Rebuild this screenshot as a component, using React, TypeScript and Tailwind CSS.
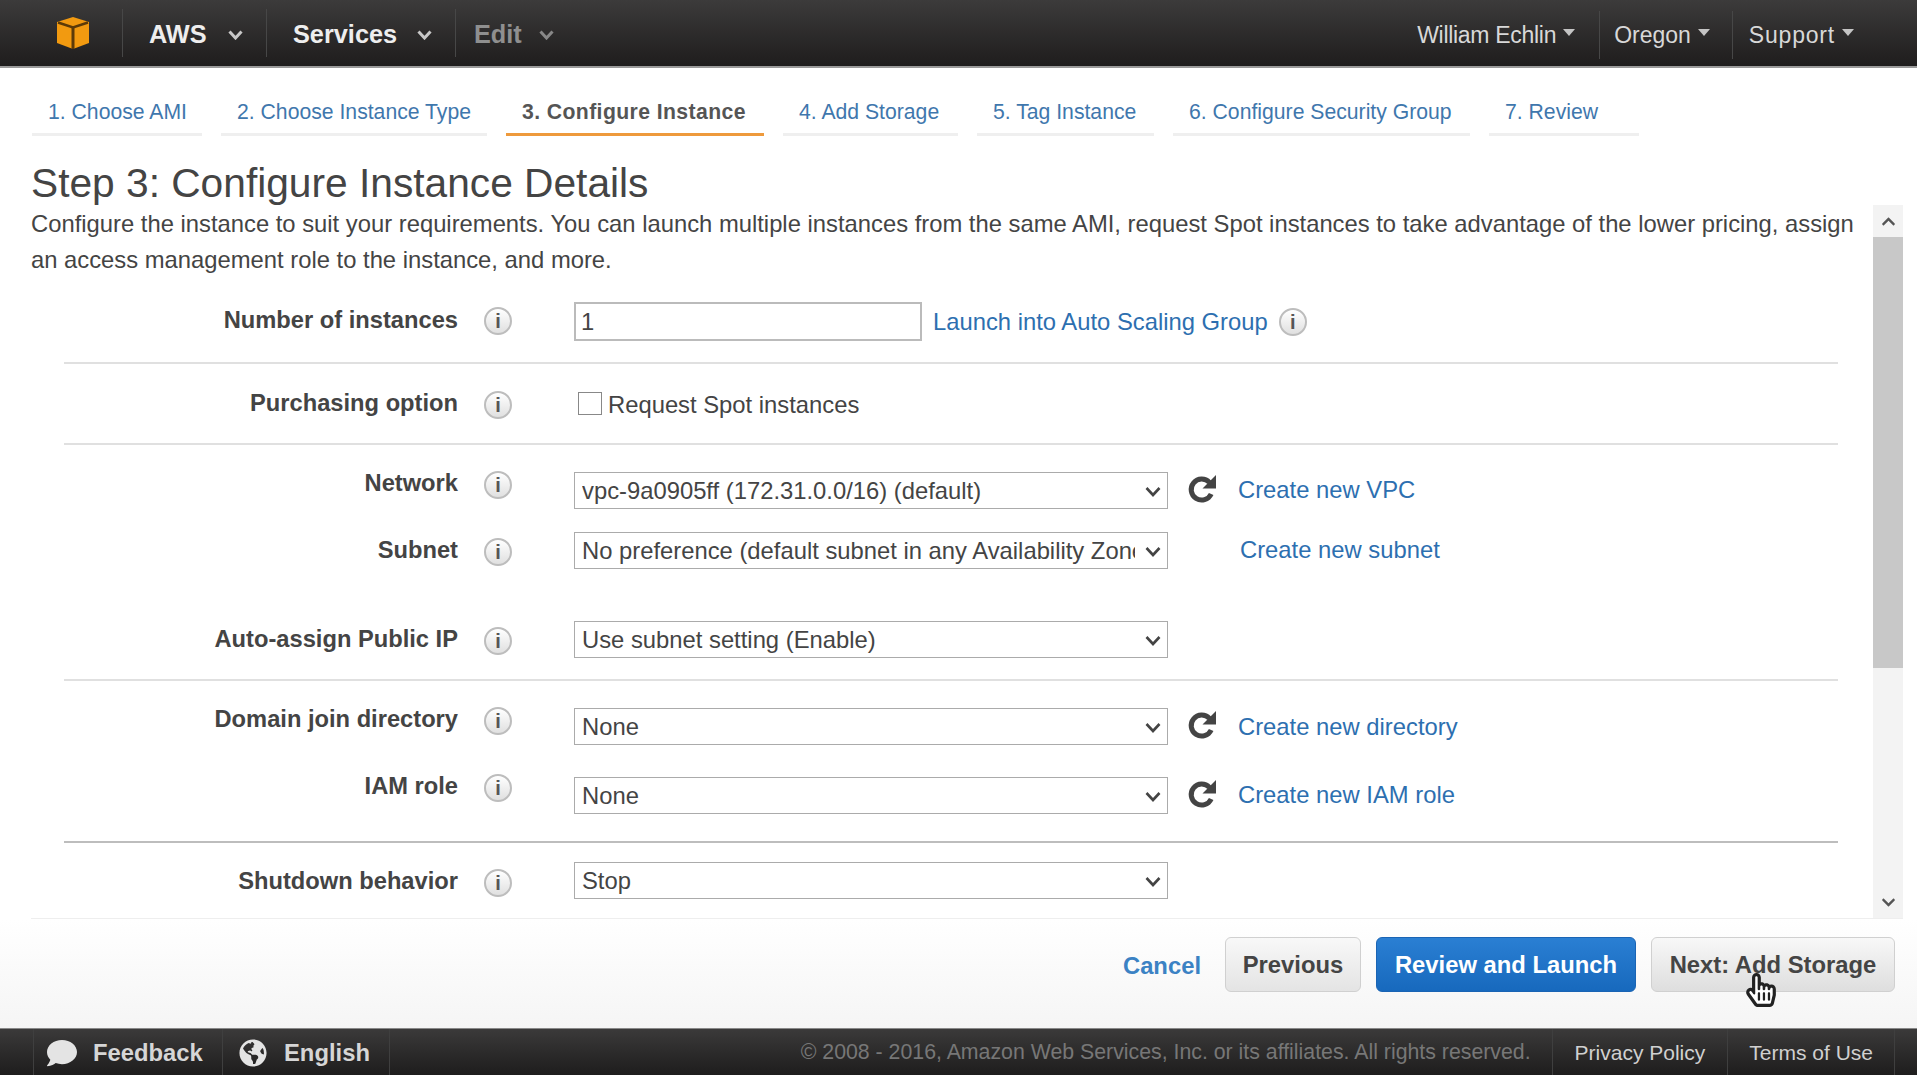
import React from "react";
import { FaComment, FaGlobeAmericas, FaChevronUp, FaChevronDown, FaRegHandPointer, FaHandPointer } from "react-icons/fa";

const Info = () => (
  <span className="flex h-[28px] w-[28px] shrink-0 items-center justify-center rounded-full border-2 border-[#bdbdbd] bg-gradient-to-b from-white to-[#e0e0e0] font-['Liberation_Sans',sans-serif] text-[20px] font-bold leading-none text-[#555]">
    i
  </span>
);

const Chev = ({ c = "#c8c8c8" }: { c?: string }) => (
  <svg width="15" height="10" viewBox="0 0 15 10" className="shrink-0">
    <path d="M1.5 1.5 L7.5 8 L13.5 1.5" fill="none" stroke={c} strokeWidth="3" />
  </svg>
);

const Caret = () => <span className="ml-[7px] mb-[5px] h-0 w-0 border-x-[6px] border-t-[7px] border-x-transparent border-t-[#c4c4c4]" />;

const Row = ({ label, className, off, children }: { label: string; className: string; off: string; children: React.ReactNode }) => (
  <div className={`flex items-center ${className}`}>
    <div className={`flex items-center ${off}`}>
      <div className="w-[394px] pb-[2px] text-right text-[23.7px] font-bold text-[#444]">{label}</div>
      <div className="flex w-[80px] justify-center"><Info /></div>
    </div>
    <div className="ml-[36px] flex items-center">{children}</div>
  </div>
);

const Sel = ({ value }: { value: string }) => (
  <div className="relative h-[37px] w-[594px]">
    <select defaultValue={value} className="h-full w-full appearance-none border border-[#ababab] bg-white pl-[7px] pr-[32px] text-[23.8px] text-[#444]">
      <option>{value}</option>
    </select>
    <svg width="16" height="11" viewBox="0 0 16 11" className="pointer-events-none absolute right-[7px] top-[14px]">
      <path d="M1.5 2 L8 9 L14.5 2" fill="none" stroke="#444" strokeWidth="2.6" />
    </svg>
  </div>
);

const Link = ({ children, className = "" }: { children: React.ReactNode; className?: string }) => (
  <a className={`text-[23.8px] text-[#2d6fb0] ${className}`}>{children}</a>
);

const Refresh = () => (
  <svg width="30" height="30" viewBox="0 0 30 30" className="ml-[19px] mb-[3px] shrink-0">
    <path d="M22.4 8.4 A10.5 10.5 0 1 0 24.2 20" fill="none" stroke="#444" strokeWidth="5" />
    <path d="M29 1 L29 14.5 L15.5 14.5 Z" fill="#444" />
  </svg>
);

const Hr = ({ className }: { className: string }) => <div className={`border-t-2 ${className}`} />;

const tabs = [
  ["1. Choose AMI", "w-[170px]"],
  ["2. Choose Instance Type", "w-[266px]"],
  ["3. Configure Instance", "w-[258px]"],
  ["4. Add Storage", "w-[175px]"],
  ["5. Tag Instance", "w-[177px]"],
  ["6. Configure Security Group", "w-[297px]"],
  ["7. Review", "w-[150px]"],
];

export default function App() {
  return (
    <div className="flex h-screen w-full flex-col overflow-hidden bg-white font-['Liberation_Sans',Arial,sans-serif] text-[#444]">
      <header className="flex h-[68px] shrink-0 items-center border-b-2 border-[#9a9a9a] bg-gradient-to-b from-[#3c3b3b] to-[#1f1d1d]">
        <div className="flex w-[122px] pl-[56px]">
          <svg width="34" height="34" viewBox="0 0 34 34">
            <path d="M1 6 L17 1 L33 6 L33 27 L17 33 L1 27 Z" fill="#f29a10" />
            <path d="M2 6.5 L17 11.5 L32 6.5" fill="none" stroke="#5c3a08" strokeWidth="2.5" />
            <path d="M17 11.5 L17 33" stroke="#5c3a08" strokeWidth="3" />
          </svg>
        </div>
        <div className="h-[48px] border-l border-[#474747]" />
        <div className="flex w-[143px] items-center pl-[26px] pt-[4px] text-[25.3px] font-bold text-[#eee]">
          AWS<span className="ml-[21px]"><Chev /></span>
        </div>
        <div className="h-[48px] border-l border-[#474747]" />
        <div className="flex w-[188px] items-center pl-[26px] pt-[4px] text-[25.3px] font-bold text-[#eee]">
          Services<span className="ml-[20px]"><Chev /></span>
        </div>
        <div className="h-[48px] border-l border-[#474747]" />
        <div className="flex items-center pl-[18px] pt-[4px] text-[25.3px] font-bold text-[#8f8f8f]">
          Edit<span className="ml-[17px]"><Chev c="#888" /></span>
        </div>
        <div className="ml-auto flex items-center pr-[63px] pt-[4px] text-[23px] text-[#d8d8d8]">
          <span className="tracking-[-0.3px]">William Echlin</span><Caret />
          <div className="ml-[24px] mr-[14px] h-[48px] border-l border-[#474747]" />
          <span>Oregon</span><Caret />
          <div className="ml-[22px] mr-[16px] h-[48px] border-l border-[#474747]" />
          <span className="tracking-[0.8px]">Support</span><Caret />
        </div>
      </header>

      <nav className="ml-[32px] mt-[26px] flex shrink-0 gap-[19px]">
        {tabs.map(([t, w], i) => (
          <div
            key={t}
            className={`${w} h-[42px] whitespace-nowrap border-b-[3px] pb-[6px] pl-[16px] text-[21.2px] leading-[36px] ${
              i === 2 ? "border-[#ee9a3c] font-bold tracking-[0.4px] text-[#555]" : "border-[#efefef] text-[#3f77ad]"
            }`}
          >
            {t}
          </div>
        ))}
      </nav>

      <h1 className="ml-[31px] mt-[22px] h-[47px] shrink-0 text-[40.7px] leading-[50px] text-[#444]">Step 3: Configure Instance Details</h1>

      <div className="ml-[31px] mr-[14px] flex h-[714px] shrink-0 border-b border-[#eee]">
        <div className="min-w-0 flex-1 overflow-hidden">
          <p className="mt-[1px] w-[1825px] text-[23.8px] leading-[36px] text-[#444]">
            Configure the instance to suit your requirements. You can launch multiple instances from the same AMI, request Spot instances to take advantage of the lower pricing, assign an access management role to the instance, and more.
          </p>
          <div className="ml-[33px] w-[1774px]">
            <Row label="Number of instances" off="" className="mt-[24px] h-[39px]">
              <input readOnly value="1" className="h-[39px] w-[348px] border-2 border-[#bbb] bg-white pl-[5px] text-[23.8px] text-[#444]" />
              <Link className="ml-[11px]">Launch into Auto Scaling Group</Link>
              <span className="ml-[11px]"><Info /></span>
            </Row>
            <Hr className="mt-[21px] border-[#e0e0e0]" />
            <Row label="Purchasing option" off="" className="mt-[26px] h-[30px]">
              <span className="mb-[4px] ml-[4px] h-[23px] w-[24px] border border-[#888] bg-white" />
              <span className="ml-[6px] text-[23.8px]">Request Spot instances</span>
            </Row>
            <Hr className="mt-[23px] border-[#e0e0e0]" />
            <Row label="Network" off="pb-[10px]" className="mt-[27px] h-[36px]">
              <Sel value="vpc-9a0905ff (172.31.0.0/16) (default)" />
              <Refresh />
              <Link className="ml-[21px]">Create new VPC</Link>
            </Row>
            <Row label="Subnet" off="pt-[4px]" className="mt-[24px] h-[36px]">
              <Sel value="No preference (default subnet in any Availability Zone)" />
              <Link className="ml-[72px]">Create new subnet</Link>
            </Row>
            <Row label="Auto-assign Public IP" off="pt-[4px]" className="mt-[53px] h-[36px]">
              <Sel value="Use subnet setting (Enable)" />
            </Row>
            <Hr className="mt-[22px] border-[#e0e0e0]" />
            <Row label="Domain join directory" off="pb-[12px]" className="mt-[27px] h-[37px]">
              <Sel value="None" />
              <Refresh />
              <Link className="ml-[21px]">Create new directory</Link>
            </Row>
            <Row label="IAM role" off="pb-[14px]" className="mt-[32px] h-[36px]">
              <Sel value="None" />
              <Refresh />
              <Link className="ml-[21px]">Create new IAM role</Link>
            </Row>
            <Hr className="mt-[28px] border-[#bdbdbd]" />
            <Row label="Shutdown behavior" off="pt-[5px]" className="mt-[19px] h-[36px]">
              <Sel value="Stop" />
            </Row>
          </div>
        </div>
        <div className="flex w-[30px] shrink-0 flex-col bg-[#f3f3f3]">
          <div className="flex h-[32px] items-center justify-center text-[15px] text-[#555]"><FaChevronUp /></div>
          <div className="h-[431px] bg-[#c8c8c8]" />
          <div className="mt-auto flex h-[32px] items-center justify-center text-[15px] text-[#555]"><FaChevronDown /></div>
        </div>
      </div>

      <div className="flex flex-1 items-start justify-end bg-gradient-to-b from-white to-[#f5f5f5] pr-[22px] pt-[18px]">
        <a className="mt-[11px] text-[23.8px] font-bold text-[#3b82c4]">Cancel</a>
        <button className="ml-[24px] h-[55px] w-[136px] rounded-[6px] border border-[#d0d0d0] bg-gradient-to-b from-[#f8f8f8] to-[#e4e4e4] text-[23.8px] font-bold text-[#444]">Previous</button>
        <button className="ml-[15px] h-[55px] w-[260px] rounded-[6px] border border-[#1a64b4] bg-gradient-to-b from-[#2a7fd3] to-[#1769bd] text-[23.8px] font-bold text-white">Review and Launch</button>
        <div className="relative ml-[15px]">
          <button className="h-[55px] w-[244px] rounded-[6px] border border-[#d0d0d0] bg-gradient-to-b from-[#f8f8f8] to-[#dedede] text-[23.8px] font-bold text-[#444]">Next: Add Storage</button>
          <FaHandPointer className="absolute left-[93px] top-[36px] text-[34px] text-white" />
          <FaRegHandPointer className="absolute left-[93px] top-[36px] text-[34px] text-[#222]" />
        </div>
      </div>

      <footer className="flex h-[47px] shrink-0 items-center border-t border-[#888] bg-gradient-to-b from-[#3b3a3a] to-[#1e1d1d]">
        <div className="ml-[33px] flex h-full w-[190px] items-center border-x border-[#3f3f3f] pl-[13px] pt-[2px] text-[23.8px] font-bold text-[#d6d6d6]">
          <FaComment className="text-[30px] text-[#e4e4e4]" /><span className="ml-[16px]">Feedback</span>
        </div>
        <div className="flex h-full w-[167px] items-center border-r border-[#3f3f3f] pl-[16px] pt-[2px] text-[23.8px] font-bold text-[#d6d6d6]">
          <FaGlobeAmericas className="text-[28px] text-[#e4e4e4]" /><span className="ml-[17px]">English</span>
        </div>
        <div className="ml-auto pr-[21px] pt-[2px] text-[21.3px] text-[#777]">© 2008 - 2016, Amazon Web Services, Inc. or its affiliates. All rights reserved.</div>
        <div className="flex h-full items-center border-l border-[#3f3f3f] px-[22px] pt-[2px] text-[21px] text-[#d0d0d0]">Privacy Policy</div>
        <div className="flex h-full items-center border-x border-[#3f3f3f] px-[21px] pt-[2px] text-[21px] text-[#d0d0d0]">Terms of Use</div>
        <div className="w-[22px]" />
      </footer>
    </div>
  );
}
